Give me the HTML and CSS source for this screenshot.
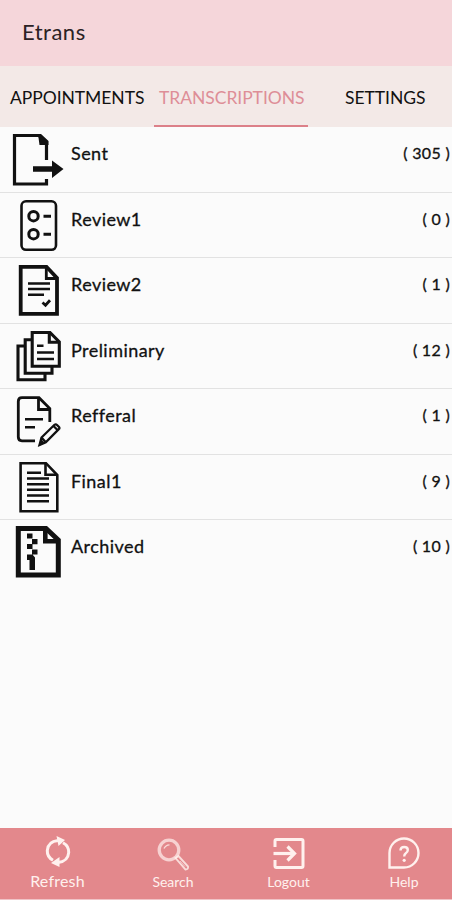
FILE: index.html
```html
<!DOCTYPE html>
<html lang="en">
<head>
  <meta charset="UTF-8">
  <meta name="viewport" content="width=device-width, initial-scale=1.0">
  <title>Etrans</title>
  <link rel="stylesheet" href="styles.css">
</head>
<body>
  <div class="app">
    <header class="title-bar">Etrans</header>

    <nav class="tabs">
      <a class="tab tab-appointments">APPOINTMENTS</a>
      <a class="tab tab-transcriptions active">TRANSCRIPTIONS</a>
      <a class="tab tab-settings">SETTINGS</a>
    </nav>

    <main class="folders">
      <!-- Sent -->
      <div class="folder">
        <svg class="folder-icon" viewBox="0 0 71 65">
          <path d="M46.5 33V15L39 8.5H14.5V57H46.5V52" stroke-width="3.2"/>
          <path class="solid" d="M38 7H41L48.5 14V18H39.5ZM33 39.2H52V33.5L63.5 42L52 51V44.8H33Z"/>
        </svg>
        <span class="name">Sent</span>
        <span class="count">( 305 )</span>
      </div>

      <!-- Review1 -->
      <div class="folder">
        <svg class="folder-icon" viewBox="0 0 71 65">
          <rect x="21.5" y="8.3" width="34.5" height="48.5" rx="4.5" stroke-width="2.6"/>
          <circle cx="33.5" cy="23.2" r="4.7" stroke-width="3"/>
          <circle cx="33.5" cy="41.2" r="4.7" stroke-width="3"/>
          <path d="M43.5 23.2H51M43.5 41.2H51" stroke-width="3"/>
        </svg>
        <span class="name">Review1</span>
        <span class="count">( 0 )</span>
      </div>

      <!-- Review2 -->
      <div class="folder">
        <svg class="folder-icon" viewBox="0 0 71 65">
          <path d="M20.7 8.8H46.5L57 20V55.8H20.7Z" stroke-width="3.8"/>
          <path d="M46.3 9V20.5H57" stroke-width="2.8"/>
          <path d="M28 25.5H50M28 30.9H50M28 36.7H44" stroke-width="2.5"/>
          <path d="M42.5 44.5L45.5 47.2L50 42.3" stroke-width="2.8"/>
        </svg>
        <span class="name">Review2</span>
        <span class="count">( 1 )</span>
      </div>

      <!-- Preliminary -->
      <div class="folder">
        <svg class="folder-icon" viewBox="0 0 71 65">
          <path d="M32.2 8.5H50L59.3 18V42.3H32.2Z" stroke-width="3.1"/>
          <path d="M49.3 9V18.3H59M31 15.8H25.2V49.2H52V43M24 22H18V55.8H45V50" stroke-width="3.1"/>
          <path d="M37 21.7H43.5M37 28.5H54M37 35H54" stroke-width="2.6"/>
        </svg>
        <span class="name">Preliminary</span>
        <span class="count">( 12 )</span>
      </div>

      <!-- Refferal -->
      <div class="folder">
        <svg class="folder-icon" viewBox="0 0 71 65">
          <path d="M35 51.8H22Q18.3 51.8 18.3 48V12.5Q18.3 8.7 22 8.7H39L49.8 19.5V33" stroke-width="2.8"/>
          <path d="M38.5 9V20.5H50" stroke-width="2.8"/>
          <path d="M25 30.3H43M25 38.2H35" stroke-width="2.6"/>
          <path d="M39.5 56L41.5 48.5L54.5 35.8Q55.8 34.8 57 36L59 38Q60 39.2 58.8 40.2L45.8 53.3ZM41.5 48.5L45.8 53.3M53.5 37L58 41.5" stroke-width="2.3"/>
          <path class="solid" d="M38.5 57L41 50L45 54Z"/>
        </svg>
        <span class="name">Refferal</span>
        <span class="count">( 1 )</span>
      </div>

      <!-- Final1 -->
      <div class="folder">
        <svg class="folder-icon" viewBox="0 0 71 65">
          <path d="M20.6 8.2H46L57.3 20V56.2H20.6Z" stroke-width="2.6"/>
          <path d="M45.5 8.5V19.8H57" stroke-width="2.6"/>
          <path d="M27 17.8H41M27 23.5H49M27 29.2H49M27 34.8H49M27 40.5H49M27 46.2H49" stroke-width="2.4"/>
        </svg>
        <span class="name">Final1</span>
        <span class="count">( 9 )</span>
      </div>

      <!-- Archived -->
      <div class="folder">
        <svg class="folder-icon" viewBox="0 0 71 65">
          <path d="M18.3 8.5H46L58.3 20V55H18.3Z" stroke-width="5"/>
          <path d="M45.3 9V21.3H58" stroke-width="4.6"/>
          <path class="solid" d="M27 13.500h5.500v5H27ZM32 19h5.500V24.200H32ZM27 24h5.500V29H27ZM32 29.500h5.500v5H32ZM27 34.500h5.500l2.500 3v12.500h-5.500V40H27Z"/>
        </svg>
        <span class="name">Archived</span>
        <span class="count">( 10 )</span>
      </div>
    </main>

    <footer class="toolbar">
      <a class="tool tool-refresh">
        <svg class="tool-icon" viewBox="0 0 36 36">
          <path d="M13 27.300Q7 24 7.300 17.500Q8 8.500 18 7.500M23 9.700Q29 13 28.700 19.500Q28 28.500 18 29.500" stroke-width="3"/>
          <path class="solid" d="M16.500 3L25 7L18.500 13ZM19.500 24L19.500 34L11 30Z"/>
        </svg>
        <span>Refresh</span>
      </a>
      <a class="tool tool-search">
        <svg class="tool-icon" viewBox="0 0 36 36">
          <circle cx="14" cy="14" r="9.800" stroke-width="3.300" opacity=".7"/>
          <path d="M9 12.500Q10.500 9 14.500 8.800" stroke-width="1.300" opacity=".8"/>
          <path d="M20.500 22L23.500 20L33 30.500Q33.500 33.500 30.500 33.500Z" stroke-width="1.900" opacity=".8"/>
          <path d="M25 25L30 30.500" stroke-width="1" opacity=".6"/>
        </svg>
        <span>Search</span>
      </a>
      <a class="tool tool-logout">
        <svg class="tool-icon" viewBox="0 0 36 36">
          <path d="M4 11V5Q4 3.500 5.500 3.500H30.500Q32 3.500 32 5V30Q32 31.500 30.500 31.500H5.500Q4 31.500 4 30V24" stroke-width="3"/>
          <path d="M2.500 17.500H23" stroke-width="3.200"/>
          <path d="M16.500 10.500L23.500 17.500L16.500 24.500" stroke-width="3.200"/>
        </svg>
        <span>Logout</span>
      </a>
      <a class="tool tool-help">
        <svg class="tool-icon" viewBox="0 0 36 36">
          <path d="M3.500 31.500V17A14.500 14.500 0 1 1 18 31.500Z" stroke-width="2.400"/>
          <path d="M14.500 14.500Q14.500 11 18.200 11Q21.800 11 21.800 14Q21.800 16 19.800 17.200Q18.200 18.300 18.200 20.500" stroke-width="2.400"/>
          <circle class="solid" cx="18.200" cy="24.300" r="1.600"/>
        </svg>
        <span>Help</span>
      </a>
    </footer>
  </div>
</body>
</html>
```

FILE: styles.css
```css
* {
  box-sizing: border-box;
}

body {
  margin: 0;
  font-family: Lato, "Liberation Sans", sans-serif;
  color: #111;
}

.app {
  display: flex;
  flex-direction: column;
  height: 900px;
  background: #fbfbfb;
}

.title-bar {
  height: 66px;
  padding: 0 22px;
  background: #f5d6da;
  font-size: 22px;
  line-height: 63px;
  letter-spacing: 0.5px;
  color: #2b2224;
}

.tabs {
  display: grid;
  grid-template-columns: 154px 154px 144px;
  grid-template-rows: 61px;
  height: 61px;
  background: #f3e9e7;
}

.tab {
  height: 61px;
  padding-top: 1px;
  font-size: 17.5px;
  line-height: 61px;
  white-space: nowrap;
  letter-spacing: -0.05px;
}

.tab-appointments {
  padding-left: 10px;
}

.tab-transcriptions {
  padding-left: 5px;
}

.tab-settings {
  padding-left: 37px;
}

.tab.active {
  border-bottom: 2px solid #dc8089;
  color: #de8e97;
}

/* Folder list */
.folders {
  flex: 1;
}

.folder {
  display: flex;
  height: 65.5px;
  border-bottom: 1.5px solid #e2e2e2;
}

.folder:last-child {
  border-bottom: none;
}

.folder-icon {
  width: 71px;
  height: 65px;
  flex: none;
  fill: none;
  stroke: #111;
}

.solid {
  fill: #111;
  stroke: none;
}

.name {
  flex: 1;
  padding-top: 14px;
  font-size: 18px;
  line-height: 24px;
  letter-spacing: 0.45px;
  -webkit-text-stroke: 0.3px #111;
}

.count {
  padding: 14px 2px 0 0;
  font-size: 16px;
  line-height: 24px;
  letter-spacing: 0.3px;
  -webkit-text-stroke: 0.3px #111;
}

/* Bottom toolbar */
.toolbar {
  display: grid;
  grid-template-columns: 115px 116px 115px 106px;
  height: 72px;
  background: #e3888c;
  border-bottom: 1px solid #f0c4c7;
  color: #fff1ee;
}

.tool {
  display: flex;
  flex-direction: column;
  align-items: center;
  padding-top: 8px;
  font-size: 14px;
  line-height: 20px;
}

.tool-help {
  padding-left: 10px;
}

.tool-refresh {
  padding-top: 5px;
  font-size: 16px;
  line-height: 24px;
  letter-spacing: 0.2px;
}

.tool-icon {
  width: 36px;
  height: 36px;
  flex: none;
  fill: none;
  stroke: #fff1ee;
}

.tool-icon .solid {
  fill: #fff1ee;
}
```
